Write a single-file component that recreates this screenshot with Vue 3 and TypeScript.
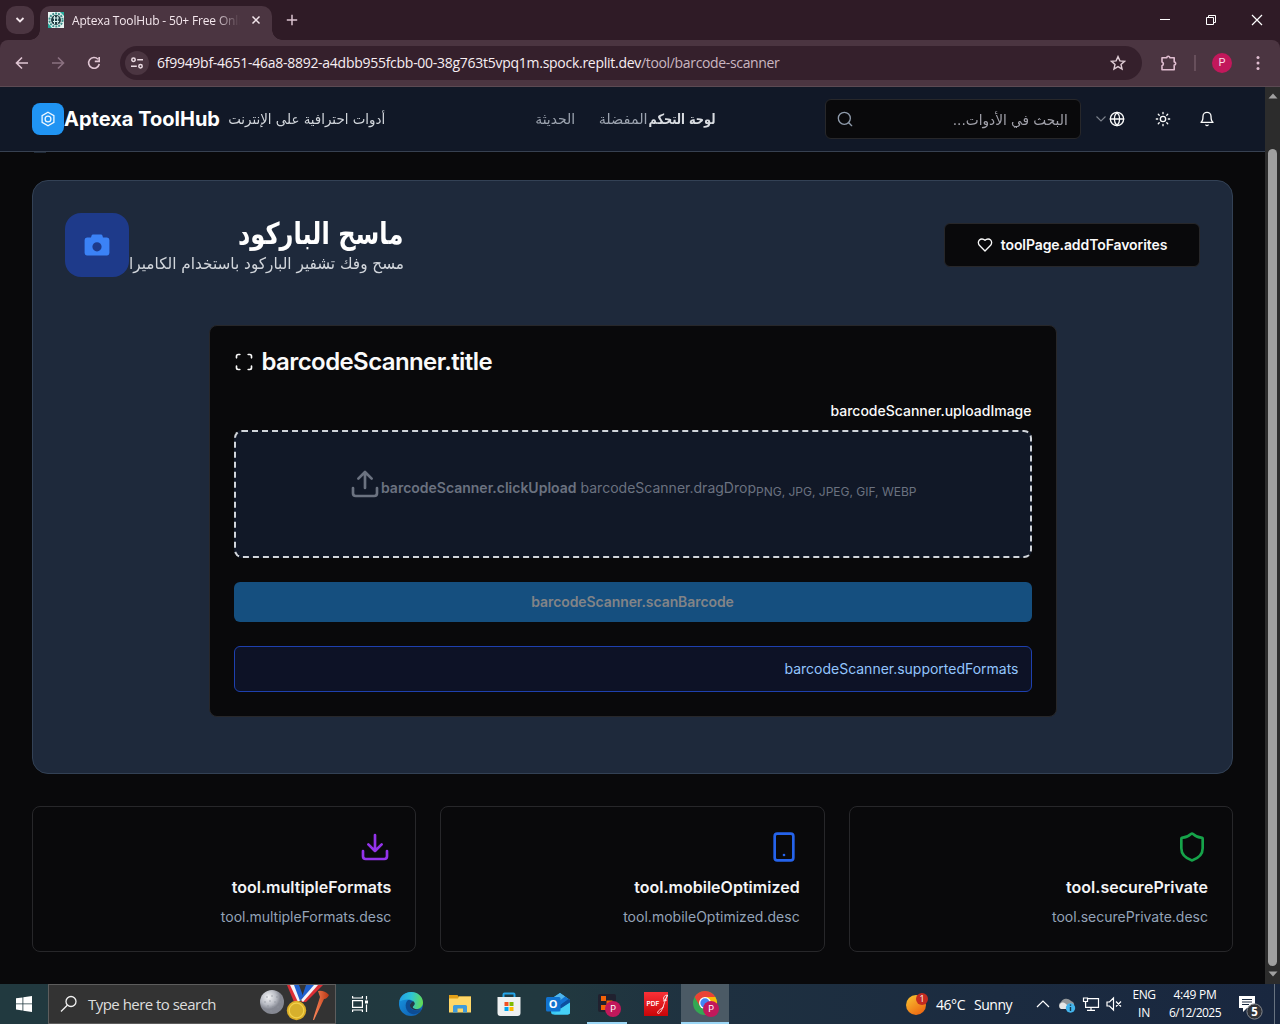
<script setup lang="ts">
import type { Directive } from 'vue'

// Spreads a label over a given width: tracking for Latin, horizontal scale for joined Arabic.
const vFit: Directive<HTMLElement, number> = {
  mounted(el, binding) {
    const text = (el.textContent ?? '').trim()
    const natural = el.getBoundingClientRect().width
    if (/[\u0600-\u06ff]/.test(text)) {
      el.style.transform = `scaleX(${binding.value / natural})`
      el.style.marginLeft = `${binding.value - natural}px`
    } else {
      el.style.letterSpacing = `${(binding.value - natural) / text.length}px`
    }
  },
}

interface Feature { title: string; desc: string; icon: 'download' | 'phone' | 'shield'; tw: number; dw: number }
const features: Feature[] = [
  { title: 'tool.multipleFormats', desc: 'tool.multipleFormats.desc', icon: 'download', tw: 159.5, dw: 170.5 },
  { title: 'tool.mobileOptimized', desc: 'tool.mobileOptimized.desc', icon: 'phone', tw: 165.5, dw: 176.5 },
  { title: 'tool.securePrivate', desc: 'tool.securePrivate.desc', icon: 'shield', tw: 142, dw: 156 },
]
</script>

<template>
  <div class="screen">
    <div class="tabs">
      <div class="tab-search"><svg width="10" height="8" viewBox="0 0 10 8"><path d="M1.500 2l3.500 3.500L8.500 2" fill="none" stroke="#f3e6ec" stroke-width="1.8" /></svg></div>
      <div class="tab">
        <svg class="favicon" width="16" height="16" viewBox="0 0 16 16"><rect width="16" height="16" fill="#e9f5f3" /><circle cx="8" cy="8" r="6.6" fill="none" stroke="#3b8f8a" stroke-width="2" stroke-dasharray="2 1" /><circle cx="8" cy="8" r="5" fill="#1d3d42" /><path d="M5 6h6M5 9.500h6M6.500 4v8M9.700 4v8" stroke="#d6efec" stroke-width="1" /><path d="M0 11l4 5H0zM12 0h4v4z" fill="#28aa9c" /></svg>
        <div class="tab-title"><span v-fit="169" class="fit">Aptexa ToolHub - 50+ Free Onli</span></div>
        <svg class="tab-x" width="10" height="10" viewBox="0 0 10 10"><path d="M1.500 1.500l7 7M8.500 1.500l-7 7" stroke="#f3e6ec" stroke-width="1.500" /></svg>
      </div>
      <svg class="plus" width="12" height="12" viewBox="0 0 12 12"><path d="M6 .800v10.400M.800 6h10.400" stroke="#dcc3d0" stroke-width="1.500" /></svg>
      <svg class="winctl" width="104" height="14" viewBox="0 0 104 14" fill="none" stroke="#fff" stroke-width="1"><path d="M1 6.500h10" /><path d="M47.500 4.500h7v7h-7zM49.500 4.500v-2h7v7h-2" /><path d="M93 2l10 10M103 2l-10 10" stroke-width="1.200" /></svg>
    </div>

    <div class="toolbar">
      <svg class="nav-icons" width="90" height="16" viewBox="0 0 90 16" fill="none" stroke-width="1.600">
        <path d="M14 8H3M8 2.500L2.500 8 8 13.500" stroke="#e0c6d3" />
        <path d="M38 8h11M44 2.500L49.500 8 44 13.500" stroke="#8b7180" />
        <path d="M84 4.200A5.400 5.400 0 1 0 85.300 9M85.200 2v4.400h-4.400" stroke="#e0c6d3" />
      </svg>
      <div class="omnibox">
        <div class="site"><svg width="14" height="14" viewBox="0 0 14 14" fill="none" stroke="#ecdce4" stroke-width="1.500"><circle cx="3.500" cy="3.700" r="1.700" /><path d="M7.200 3.700H13M1 10.200h5.800" /><circle cx="10.500" cy="10.200" r="1.700" /></svg></div>
        <div class="url"><span v-fit="484" class="fit host">6f9949bf-4651-46a8-8892-a4dbb955fcbb-00-38g763t5vpq1m.spock.replit.dev</span><span v-fit="138.500" class="fit path">/tool/barcode-scanner</span></div>
        <svg class="star" width="16" height="16" viewBox="0 0 16 16"><path d="M8 1.600l1.900 4.300 4.600.4-3.500 3.100 1.050 4.600L8 11.600 3.950 14 5 9.400 1.500 6.300l4.600-.4z" fill="none" stroke="#e0cdd6" stroke-width="1.400" /></svg>
      </div>
      <svg class="puzzle" width="18" height="18" viewBox="0 0 18 18"><path d="M2 3.800h4.800a1.500 1.500 0 0 1 3 0h4.400v4.200a1.500 1.500 0 0 1 0 3v4.800H2v-4.100a2 2 0 0 0 0-3.800z" fill="none" stroke="#e0bdd0" stroke-width="1.600" stroke-linejoin="round" /></svg>
      <i class="sep"></i>
      <div class="avatar">P</div>
      <svg class="dots" width="4" height="16" viewBox="0 0 4 16" fill="#e0bdd0"><circle cx="2" cy="2.500" r="1.500" /><circle cx="2" cy="8" r="1.500" /><circle cx="2" cy="13.500" r="1.500" /></svg>
    </div>

    <div class="viewport">
      <div class="page">
        <header class="header">
          <div class="logo"><svg width="16" height="16" viewBox="0 0 16 16" fill="none" stroke="#eef7ff" stroke-width="1.300"><path d="M8 1.200l5.900 3.400v6.800L8 14.800l-5.900-3.400V4.600z" /><circle cx="8" cy="8" r="2.900" /></svg></div>
          <div class="brand"><span v-fit="156" class="fit">Aptexa ToolHub</span></div>
          <div class="tagline"><span v-fit="157" class="fit ar">أدوات احترافية على الإنترنت</span></div>
          <nav class="nav">
            <span v-fit="40" class="fit ar recent">الحديثة</span>
            <span v-fit="49" class="fit ar">المفضلة</span>
            <span v-fit="67" class="fit ar strong">لوحة التحكم</span>
          </nav>
          <div class="search">
            <svg width="16" height="16" viewBox="0 0 24 24" fill="none" stroke="#8f9bab" stroke-width="2" stroke-linecap="round"><circle cx="11" cy="11" r="9" /><path d="M22 22l-4.300-4.300" /></svg>
            <span v-fit="115" class="fit ar placeholder">البحث في الأدوات...</span>
          </div>
          <svg class="chev" width="12" height="12" viewBox="0 0 24 24" fill="none" stroke="#7d838d" stroke-width="2.200"><path d="M3 7l9 9 9-9" /></svg>
          <svg class="lu globe" width="16" height="16" viewBox="0 0 24 24"><circle cx="12" cy="12" r="10" /><path d="M12 2a14.500 14.500 0 0 0 0 20 14.500 14.500 0 0 0 0-20M2 12h20" /></svg>
          <svg class="lu sun" width="16" height="16" viewBox="0 0 24 24"><circle cx="12" cy="12" r="4" /><path d="M12 2v2M12 20v2M4.930 4.930l1.410 1.410M17.660 17.660l1.410 1.410M2 12h2M20 12h2M6.340 17.660l-1.410 1.410M19.070 4.930l-1.410 1.410" /></svg>
          <svg class="lu bell" width="16" height="16" viewBox="0 0 24 24"><path d="M6 8a6 6 0 0 1 12 0c0 7 3 9 3 9H3s3-2 3-9M10.300 21a1.940 1.940 0 0 0 3.400 0" /></svg>
        </header>
        <i class="remnant"></i>

        <section class="tool">
          <div class="tool-head">
            <div class="tool-icon"><svg width="26" height="24" viewBox="0 0 26 24"><path fill="#3b82f6" fill-rule="evenodd" d="M9 1.500h8a1.500 1.500 0 0 1 1.400 1L19 4.500h4A2.500 2.500 0 0 1 25.400 7v13a2.500 2.500 0 0 1-2.400 2.500H3A2.500 2.500 0 0 1 .600 20V7A2.500 2.500 0 0 1 3 4.500h4l.600-2a1.500 1.500 0 0 1 1.400-1zM13 9.200a4.600 4.600 0 1 0 0 9.200 4.600 4.600 0 0 0 0-9.200z" /></svg></div>
            <div class="tool-text">
              <div class="h1"><span v-fit="165.500" class="fit ar">ماسح الباركود</span></div>
              <div class="sub"><span v-fit="275" class="fit ar">مسح وفك تشفير الباركود باستخدام الكاميرا</span></div>
            </div>
            <div class="fav">
              <svg class="lu" width="16" height="16" viewBox="0 0 24 24"><path d="M19 14c1.490-1.460 3-3.210 3-5.500A5.500 5.500 0 0 0 16.500 3c-1.760 0-3 .5-4.500 2-1.500-1.500-2.740-2-4.500-2A5.500 5.500 0 0 0 2 8.500c0 2.300 1.500 4.050 3 5.500l7 7Z" /></svg>
              <span v-fit="166.500" class="fit">toolPage.addToFavorites</span>
            </div>
          </div>

          <div class="scanner">
            <div class="scan-title">
              <svg class="lu" width="20" height="24" viewBox="0 0 24 24"><path d="M3 7V5a2 2 0 0 1 2-2h2M17 3h2a2 2 0 0 1 2 2v2M21 17v2a2 2 0 0 1-2 2h-2M7 21H5a2 2 0 0 1-2-2v-2" /></svg>
              <span v-fit="230.500" class="fit">barcodeScanner.title</span>
            </div>
            <div class="label"><span v-fit="201" class="fit">barcodeScanner.uploadImage</span></div>
            <div class="drop">
              <svg width="32" height="32" viewBox="0 0 24 24" fill="none" stroke="#6b7280" stroke-width="2" stroke-linecap="round" stroke-linejoin="round"><path d="M21 15v4a2 2 0 0 1-2 2H5a2 2 0 0 1-2-2v-4M17 8l-5-5-5 5M12 3v12" /></svg>
              <b v-fit="195.500" class="fit">barcodeScanner.clickUpload</b>
              <span v-fit="175.500" class="fit drag">barcodeScanner.dragDrop</span>
              <small v-fit="160.500" class="fit">PNG, JPG, JPEG, GIF, WEBP</small>
            </div>
            <div class="scan-btn"><span v-fit="202.500" class="fit">barcodeScanner.scanBarcode</span></div>
            <div class="info"><span v-fit="234" class="fit">barcodeScanner.supportedFormats</span></div>
          </div>
        </section>

        <div class="features">
          <div v-for="f in features" :key="f.title" class="feature">
            <svg v-if="f.icon === 'download'" class="fi purple" width="32" height="32" viewBox="0 0 24 24"><path d="M21 15v4a2 2 0 0 1-2 2H5a2 2 0 0 1-2-2v-4M7 10l5 5 5-5M12 15V3" /></svg>
            <svg v-else-if="f.icon === 'phone'" class="fi blue" width="32" height="32" viewBox="0 0 24 24"><rect x="5" y="2" width="14" height="20" rx="2" /><path d="M12 18h.01" /></svg>
            <svg v-else class="fi green" width="32" height="32" viewBox="0 0 24 24"><path d="M20 13c0 5-3.500 7.500-7.660 8.950a1 1 0 0 1-.67-.01C7.500 20.500 4 18 4 13V6a1 1 0 0 1 1-1c2 0 4.500-1.200 6.240-2.720a1.170 1.170 0 0 1 1.520 0C14.510 3.810 17 5 19 5a1 1 0 0 1 1 1z" /></svg>
            <div class="ft"><span v-fit="f.tw" class="fit">{{ f.title }}</span></div>
            <div class="fd"><span v-fit="f.dw" class="fit">{{ f.desc }}</span></div>
          </div>
        </div>
      </div>
      <div class="scrollbar">
        <svg width="10" height="6" viewBox="0 0 10 6"><path d="M5 .500L9.500 5.500h-9z" fill="#a0a0a0" /></svg>
        <i></i>
        <svg width="10" height="6" viewBox="0 0 10 6"><path d="M5 5.500L9.500 .500h-9z" fill="#a0a0a0" /></svg>
      </div>
    </div>

    <footer class="taskbar">
      <svg class="win" width="16" height="16" viewBox="0 0 16 16" fill="#fff"><path d="M0 2.300l6.500-.9v6.100H0zM7.300 1.300L16 0v7.500H7.300zM0 8.300h6.500v6.100L0 13.500zM7.300 8.300H16v7.600l-8.700-1.200z" /></svg>
      <div class="tsearch">
        <svg width="18" height="18" viewBox="0 0 18 18" fill="none" stroke="#f2f2f2" stroke-width="1.300"><circle cx="11" cy="6.500" r="5" /><path d="M7.300 10.200L1 16.500" /></svg>
        <span v-fit="128" class="fit">Type here to search</span>
        <svg class="medals" width="72" height="38" viewBox="0 0 72 38">
          <defs>
            <radialGradient id="ball" cx=".35" cy=".3"><stop offset="0" stop-color="#f4f5f7" /><stop offset=".65" stop-color="#b9bcc4" /><stop offset="1" stop-color="#858892" /></radialGradient>
            <linearGradient id="tee"><stop offset="0" stop-color="#ff8a5c" /><stop offset="1" stop-color="#b93614" /></linearGradient>
          </defs>
          <circle cx="13" cy="17" r="12" fill="url(#ball)" />
          <g fill="#8e929c"><circle cx="8" cy="12" r=".7" /><circle cx="13" cy="11" r=".7" /><circle cx="18" cy="12" r=".7" /><circle cx="6" cy="17" r=".7" /><circle cx="11" cy="16" r=".7" /><circle cx="16" cy="17" r=".7" /><circle cx="21" cy="17" r=".7" /><circle cx="9" cy="21" r=".7" /><circle cx="14" cy="22" r=".7" /><circle cx="19" cy="22" r=".7" /><circle cx="12" cy="26" r=".7" /></g>
          <path d="M28 0h4l8 17h-5z" fill="#dc2f36" /><path d="M31 0h5l6 15-3 2z" fill="#f4f4f8" /><path d="M35 0h5l4 11-3 5z" fill="#2061cf" />
          <path d="M54 0h10L47 17h-5z" fill="#dc2f36" /><path d="M51 0h8L44 17l-2-2z" fill="#f4f4f8" /><path d="M47 0h8L42 15z" fill="#2061cf" />
          <circle cx="37.500" cy="25.500" r="9.700" fill="#dcae27" /><circle cx="37.500" cy="25.500" r="7.300" fill="#d7b02c" stroke="#f2d24c" stroke-width="1.200" />
          <path d="M59 6q6-1 11 4-2 4-5 4L55 35l-1 0 1-4 6-19z" fill="url(#tee)" />
        </svg>
      </div>
      <svg class="tv" width="18" height="18" viewBox="0 0 18 18" fill="none" stroke="#fff" stroke-width="1.200"><path d="M1.600 5.600h9.800v6.800H1.600zM1.600 1v2h9.800V1M1.600 17v-2h9.800v2M15.500 1v3.500M15.500 9.500V17" /><path d="M14 5.500h3v3h-3z" fill="#fff" stroke="none" /></svg>
      <svg class="ti edge" width="24" height="24" viewBox="0 0 24 24">
        <defs><linearGradient id="eg" x1="0" y1=".4" x2="1" y2=".5"><stop offset="0" stop-color="#219fe8" /><stop offset=".5" stop-color="#2fc4d2" /><stop offset="1" stop-color="#64dc50" /></linearGradient><linearGradient id="eb" x1="0" y1="0" x2="1" y2="1"><stop offset="0" stop-color="#1798e4" /><stop offset="1" stop-color="#0e57ab" /></linearGradient></defs>
        <circle cx="12" cy="12" r="12" fill="url(#eb)" />
        <path d="M.3 9.500C1.500 3.500 6.500 0 12 0c7 0 12 5 12 10.500 0 4-3 6.500-6.500 6.500-3 0-4.500-1.400-3.300-2.700C17.500 10 13 7.500 9 7.500 5 7.500 1.500 9 .3 9.500z" fill="url(#eg)" />
        <path d="M9 8c-4 3-3 12 4 14 4 .8 7.500-1.500 9.500-4.300-4 2-11 1-11.500-4.200-.1-2 1-3.500 2.500-4.200C12 8.300 10.500 8 9 8z" fill="#0d4c94" />
        <path d="M14 9.300c2.500 1.300 2 3.600.4 4.800-1.400 1.100-.8 3.700 7.600 3.700 0 .5-8 1.500-10.500-2.300-1.200-2.200-.1-5 2.500-6.200z" fill="#243845" />
      </svg>
      <svg class="ti folder" width="22" height="20" viewBox="0 0 22 20"><path d="M0 1h8.500l1 1.500H22V18H0z" fill="#e2a018" /><path d="M0 4.500h9l1-2h12v16H0z" fill="#ffd768" /><path d="M4 18.500v-6a1.500 1.500 0 0 1 1.500-1.500h11a1.500 1.500 0 0 1 1.500 1.500v6h-4v-4H8.500v4z" fill="#3f9bdc" /></svg>
      <svg class="ti store" width="24" height="24" viewBox="0 0 24 24"><path d="M6.500 5V2.500a1 1 0 0 1 1-1h9a1 1 0 0 1 1 1V5" fill="none" stroke="#25a4e8" stroke-width="2" /><path d="M.5 5h23v16a3 3 0 0 1-3 3h-17a3 3 0 0 1-3-3z" fill="#eef0f1" /><path d="M7.500 10h4v4h-4z" fill="#f25022" /><path d="M12.500 10h4v4h-4z" fill="#7fba00" /><path d="M7.500 15h4v4h-4z" fill="#00a4ef" /><path d="M12.500 15h4v4h-4z" fill="#ffb900" /></svg>
      <svg class="ti outlook" width="25" height="24" viewBox="0 0 25 24"><path d="M5 7l9-6 10 7v12a2.500 2.500 0 0 1-2.500 2.500H7a2.500 2.500 0 0 1-2-2.500z" fill="#38c8f4" /><path d="M5 7l9-6 5 3.500L10 14z" fill="#4fb4ec" /><path d="M12 14l10-7.500 2 1.500v3L15 17z" fill="#0d4f9f" /><path d="M12 10l7-5.500 3.500 2.500L14 13z" fill="#1475d4" /><path d="M14 17l10-6.500V20a2.500 2.500 0 0 1-2.500 2.500H8z" fill="#45d0f6" /><rect x="0" y="5" width="14.500" height="14.500" rx="1.500" fill="#1173cf" /><text x="7.200" y="16.200" text-anchor="middle" fill="#fff" font-family="Open Sans" font-weight="700" font-size="11">O</text></svg>
      <div class="app replit"><svg width="24" height="26" viewBox="0 0 24 26"><rect x="1" y="3" width="18" height="18" rx="2" fill="#20212f" /><path d="M4 5h5v5H4zM4 14h5v5H4zM9.500 9.500h6v4.500h-6z" fill="#f26207" /><circle cx="16" cy="18" r="8" fill="#c2185b" /><text x="16" y="21.300" text-anchor="middle" font-family="Roboto" font-size="9" fill="#fff">P</text></svg></div>
      <svg class="ti pdf" width="24" height="24" viewBox="0 0 24 24"><defs><linearGradient id="pg" x2="0" y2="1"><stop offset="0" stop-color="#fb3137" /><stop offset="1" stop-color="#c90508" /></linearGradient></defs><rect width="24" height="24" fill="url(#pg)" /><text x="2.500" y="14" font-family="Inter" font-weight="600" font-size="6.600" fill="#fff">PDF</text><path d="M23.500 3c-3 0-4.500 2.500-3.800 4.500 1.300 1 2.800-1 3.800-4.500-2.500 4-3.500 11-6 15.500-1.800 3.200-4 3.500-4 2 .5-2 3.500-3.500 6.500-6M19 9l4-1" fill="none" stroke="#fff" stroke-width=".8" /></svg>
      <div class="app chrome"><svg width="26" height="27" viewBox="0 0 26 27"><circle cx="12" cy="12" r="12" fill="#34a853" /><path d="M1.600 6A12 12 0 0 1 22.400 6H12L6.800 15z" fill="#ea4335" /><path d="M22.400 6A12 12 0 0 1 12 24l5.200-9L12 6z" fill="#fbbc05" /><circle cx="12" cy="12" r="6" fill="#fff" /><circle cx="12" cy="12" r="4.700" fill="#4285f4" /><circle cx="18" cy="18" r="8" fill="#c2185b" /><text x="18" y="21.300" text-anchor="middle" font-family="Roboto" font-size="9" fill="#fff">P</text></svg></div>
      <svg class="weather" width="24" height="24" viewBox="0 0 24 24"><defs><linearGradient id="sg" x2=".7" y2="1"><stop offset="0" stop-color="#f8c732" /><stop offset="1" stop-color="#ee6812" /></linearGradient></defs><circle cx="11" cy="13" r="10" fill="url(#sg)" /><circle cx="17" cy="7" r="6" fill="#c42b20" /><text x="17" y="10.200" text-anchor="middle" font-family="Open Sans" font-size="9" fill="#fff">1</text></svg>
      <div class="temp"><span v-fit="29" class="fit">46°C</span><span v-fit="38" class="fit sunny">Sunny</span></div>
      <svg class="tray" width="90" height="18" viewBox="0 0 90 18" fill="none" stroke="#fff" stroke-width="1.200">
        <path d="M1 12l6-6 6 6" /><path d="M26 14h-1a4 4 0 0 1 0-7 6 6 0 0 1 10-1 4 4 0 0 1 3 5v3z" fill="#929699" stroke="none" /><path d="M26 14h-1a3.500 3.500 0 0 1 0-6c3-1 4 0 6 2l2 4z" fill="#e6e6e6" stroke="none" /><circle cx="34.500" cy="13" r="4.700" fill="#43b4ec" stroke="none" /><path d="M34.500 12v4M34.500 9.500v1.300" stroke="#12374b" stroke-width="1.400" />
        <path d="M52 3.600h10.500v8.800H49.600V7M55 12.500V15M51 15.400h8M47.500 3h4v3.500h-4zM49.500 6.500v3" /><path d="M71 7h2.500l4-4v12l-4-4H71zM80 6.500l5 5M85 6.500l-5 5" />
      </svg>
      <div class="stack lang"><span v-fit="23" class="fit">ENG</span><span v-fit="12" class="fit">IN</span></div>
      <div class="stack clock"><span v-fit="43" class="fit">4:49 PM</span><span v-fit="52" class="fit">6/12/2025</span></div>
      <svg class="notif" width="26" height="26" viewBox="0 0 26 26"><path d="M1 1h16v12H9l-4 4v-4H1z" fill="#fff" /><path d="M4 4.500h10M4 7h10M4 9.500h7" stroke="#1b2a40" stroke-width="1" /><circle cx="16.500" cy="16.500" r="7.600" fill="#303237" stroke="#85898f" /><text x="16.500" y="20.700" text-anchor="middle" font-family="Open Sans" font-weight="700" font-size="11.500" fill="#fff">5</text></svg>
      <i class="desk"></i>
    </footer>
  </div>
</template>

<style>
body { margin: 0; background: #09090b; overflow: hidden; }
</style>

<style scoped>
* { box-sizing: border-box; }
svg { display: block; flex: none; }
.screen { width: 1280px; height: 1024px; overflow: hidden; display: flex; flex-direction: column; font-family: Inter, sans-serif; background: #2f1b26; }
.fit { display: inline-block; white-space: pre; flex: none; }
.ar { direction: rtl; transform-origin: right center; font-family: "DejaVu Sans", sans-serif; }
.lu { fill: none; stroke: #fafafa; stroke-width: 2; stroke-linecap: round; stroke-linejoin: round; }

.tabs { height: 40px; display: flex; align-items: center; background: #2f1b26; flex: none; }
.tab-search { width: 28px; height: 28px; margin-left: 6px; border-radius: 10px; background: #4b3541; display: flex; align-items: center; justify-content: center; }
.tab { position: relative; width: 232px; height: 34px; margin: 6px 0 0 6px; border-radius: 10px 10px 0 0; background: #4b3541; display: flex; align-items: center; }
.tab::before, .tab::after { content: ""; position: absolute; bottom: 0; width: 10px; height: 10px; }
.tab::before { left: -10px; background: radial-gradient(circle at 0 0, transparent 9.500px, #4b3541 10px); }
.tab::after { right: -10px; background: radial-gradient(circle at 100% 0, transparent 9.500px, #4b3541 10px); }
.favicon { margin: -6px 0 0 8px; }
.tab-title { width: 168px; margin: -4px 0 0 8px; overflow: hidden; font: 12px/18px "Open Sans", sans-serif; color: #f3e6ec; mask-image: linear-gradient(90deg, #000 142px, transparent 168px); }
.tab-x { margin: -6px 0 0 11px; }
.plus { margin-left: 14px; }
.winctl { margin: 0 0 0 861px; }

.toolbar { height: 47px; flex: none; display: flex; align-items: center; background: #4b3541; border-bottom: 1px solid #5c4a53; border-radius: 8px 8px 0 0; }
.nav-icons { margin-left: 14px; }
.omnibox { width: 1022px; height: 34px; margin-left: 16px; border-radius: 17px; background: #35202c; display: flex; align-items: center; }
.site { width: 24px; height: 24px; margin-left: 5px; border-radius: 50%; background: #4b3541; display: flex; align-items: center; justify-content: center; }
.url { margin-left: 8px; width: 940px; font: 14px/20px "Open Sans", sans-serif; color: #f7eef2; display: flex; }
.path { color: #cbb7c1; }
.star { margin-left: 13px; }
.puzzle { margin-left: 18px; }
.sep { width: 2px; height: 16px; margin-left: 16px; background: #674f5b; }
.avatar { width: 20px; height: 20px; margin-left: 16px; border-radius: 50%; background: #c2185b; color: #fbdbe8; font: 11px/20px Roboto, sans-serif; text-align: center; }
.dots { margin-left: 24px; }

.viewport { height: 897px; flex: none; display: flex; }
.page { position: relative; width: 1265px; background: #09090b; }
.header { height: 65px; background: #111827; border-bottom: 1px solid #374151; display: flex; align-items: center; padding-left: 32px; }
.logo { width: 32px; height: 32px; border-radius: 8px; background: #2094f3; display: flex; align-items: center; justify-content: center; }
.brand { width: 164px; font: 700 20px/28px Inter, sans-serif; color: #fff; }
.tagline { width: 156.500px; font-size: 14px; line-height: 20px; color: #d1d5db; }
.nav { width: 180px; margin-left: 150.500px; display: flex; font-size: 14px; line-height: 20px; color: #9ca3af; font-weight: 500; }
.recent { margin-right: 24px; }
.strong { font-weight: 700; color: #d9dce1; }
.search { width: 256px; height: 40px; margin-left: 110px; padding: 0 12px 0 11px; border: 1px solid #27272a; border-radius: 6px; background: #09090b; color: #a1a1aa; display: flex; align-items: center; justify-content: space-between; font-size: 14px; }
.placeholder { padding-top: 2px; }
.chev { margin-left: 14px; }
.globe { margin-left: 2px; }
.sun { margin-left: 30px; }
.bell { margin-left: 28px; }
.remnant { position: absolute; left: 34px; top: 65px; width: 12px; height: 1px; background: #1f2937; }

.tool { width: 1201px; height: 594px; margin: 28px 0 0 32px; padding: 32px; border: 1px solid #334155; border-radius: 16px; background: #1e293b; }
.tool-head { height: 64px; display: flex; align-items: center; }
.tool-icon { width: 64px; height: 64px; border-radius: 16px; background: #1e3a8a; display: flex; align-items: center; justify-content: center; }
.tool-text { width: 275px; height: 60px; display: flex; flex-direction: column; align-items: flex-end; }
.h1 { height: 36px; line-height: 36px; font-size: 30px; font-weight: 700; color: #fff; padding-right: 1px; }
.sub { height: 24px; line-height: 24px; font-size: 16px; color: #d1d5db; }
.fav { width: 256px; height: 44px; margin-left: auto; border: 1px solid #27272a; border-radius: 6px; background: #09090b; color: #fafafa; display: flex; align-items: center; justify-content: center; gap: 8px; font-size: 14px; line-height: 20px; font-weight: 600; }
.scanner { width: 848px; height: 392px; margin: 48px 0 0 144px; padding: 24px; border: 1px solid #27272a; border-radius: 8px; background: #09090b; color: #fafafa; }
.scan-title { height: 24px; display: flex; align-items: center; gap: 7.500px; font-size: 24px; line-height: 24px; font-weight: 600; }
.label { margin: 30px .500px 0 0; height: 14px; text-align: right; font-size: 14px; line-height: 14px; font-weight: 500; }
.drop { height: 128px; margin-top: 12px; border: 2px dashed #d1d5db; border-radius: 8px; background: #111827; color: #6b7280; display: flex; align-items: center; padding: 0 0 17px 113px; font-size: 14px; line-height: 20px; }
.drop svg { margin-top: -3px; }
.drop b { font-weight: 600; margin-top: 5px; }
.drag { margin: 5px 0 0 4px; }
.drop small { font-size: 12px; line-height: 16px; margin-top: 13px; }
.scan-btn { height: 40px; margin-top: 24px; padding-right: 1px; border-radius: 6px; background: #154f7f; color: #828487; text-align: center; font-size: 14px; line-height: 40px; font-weight: 600; }
.info { height: 46px; margin-top: 24px; padding-right: 12.500px; border: 1px solid #1e40af; border-radius: 6px; background: #0d1226; color: #93c5fd; text-align: right; font-size: 14px; line-height: 44px; }

.features { width: 1201px; margin: 32px 0 0 32px; display: grid; grid-template-columns: repeat(3, 1fr); gap: 24px; }
.feature { height: 146px; padding: 24px; border: 1px solid #27272a; border-radius: 8px; display: flex; flex-direction: column; align-items: flex-end; }
.fi { fill: none; stroke-width: 2; stroke-linecap: round; stroke-linejoin: round; }
.purple { stroke: #9333ea; }
.blue { stroke: #2563eb; }
.green { stroke: #16a34a; }
.ft { margin-top: 12px; font-size: 16px; line-height: 24px; font-weight: 600; color: #f3f4f6; }
.fd { margin-top: 8px; font-size: 14px; line-height: 20px; color: #94a3b8; }
.scrollbar { width: 15px; background: #2c2c2c; display: flex; flex-direction: column; align-items: center; padding: 5px 0; }
.scrollbar i { width: 9px; height: 817px; margin: 50px 0 4px; border-radius: 5px; background: #9f9f9f; flex: none; }
.scrollbar svg { margin-top: 1px; }

.taskbar { height: 40px; flex: none; display: flex; align-items: center; background: linear-gradient(90deg, #21393f 0, #21383f 560px, #1e3040 720px, #1b2b40 1000px, #19273f 100%); font-family: "Open Sans", sans-serif; color: #fff; }
.win { margin-left: 16px; }
.tsearch { width: 288px; height: 40px; margin-left: 16px; padding-left: 11px; border: 1px solid #5d5d5d; background: #333; display: flex; align-items: center; font-size: 15px; color: #ddd; }
.tsearch .fit { margin-left: 10px; }
.medals { margin-left: 43px; }
.tv { margin-left: 15px; }
.edge { margin-left: 30px; }
.folder { margin-left: 26px; }
.store { margin-left: 26px; }
.outlook { margin-left: 25px; }
.app { height: 40px; display: flex; align-items: center; }
.replit { width: 40px; margin-left: 16px; padding: 2px 0 0 10px; border-bottom: 2px solid #9bd6f5; }
.pdf { margin-left: 17px; }
.chrome { width: 48px; margin-left: 13px; padding: 3px 0 0 12px; background: #4b5a65; border-bottom: 2px solid #9bd6f5; }
.weather { margin-left: 176px; }
.temp { display: flex; margin-left: 7px; font-size: 14px; }
.sunny { margin-left: 9px; }
.tray { margin-left: 24px; }
.stack { display: flex; flex-direction: column; align-items: center; font-size: 12px; line-height: 17.500px; padding-bottom: 1px; }
.lang { width: 24px; margin-left: 6px; }
.clock { width: 54px; margin-left: 12px; }
.notif { margin: 7px 0 0 16px; }
.desk { width: 1px; height: 40px; margin-left: 10px; background: #687380; }
</style>
